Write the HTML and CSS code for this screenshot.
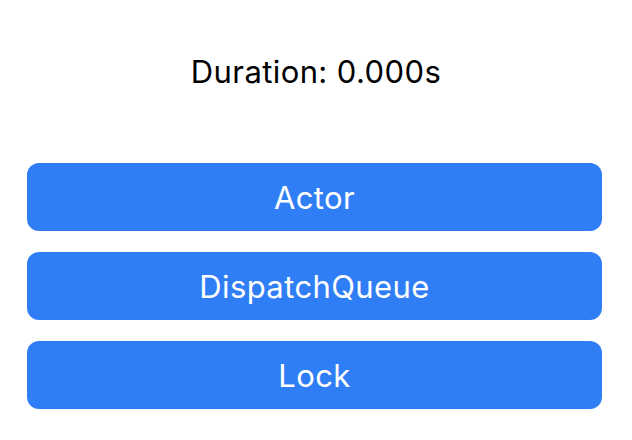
FILE: index.html
```html
<!DOCTYPE html>
<html>
<head>
<meta charset="utf-8">
<link rel="stylesheet" href="styles.css">
</head>
<body>
<div class="screen">
  <div class="duration">Duration: 0.000s</div>
  <div class="buttons">
    <button class="btn">Actor</button>
    <button class="btn">DispatchQueue</button>
    <button class="btn">Lock</button>
  </div>
</div>
</body>
</html>
```

FILE: styles.css
```css
html, body {
  margin: 0;
  padding: 0;
  background: #ffffff;
}
.screen {
  width: 632px;
  height: 440px;
  display: flex;
  flex-direction: column;
  align-items: stretch;
  font-family: Inter, "Noto Sans", sans-serif;
}
.duration {
  margin-top: 54px;
  height: 36px;
  line-height: 36px;
  text-align: center;
  font-size: 31px;
  color: #000;
  letter-spacing: 0.4px;
}
.buttons {
  margin: 73px 30px 0 27px;
  display: flex;
  flex-direction: column;
  gap: 21px;
}
.btn {
  height: 68px;
  border: none;
  border-radius: 12px;
  background: #307ef6;
  color: #fff;
  font-family: Inter, "Noto Sans", sans-serif;
  font-size: 31px;
  letter-spacing: 0.4px;
  padding: 0;
}
```
